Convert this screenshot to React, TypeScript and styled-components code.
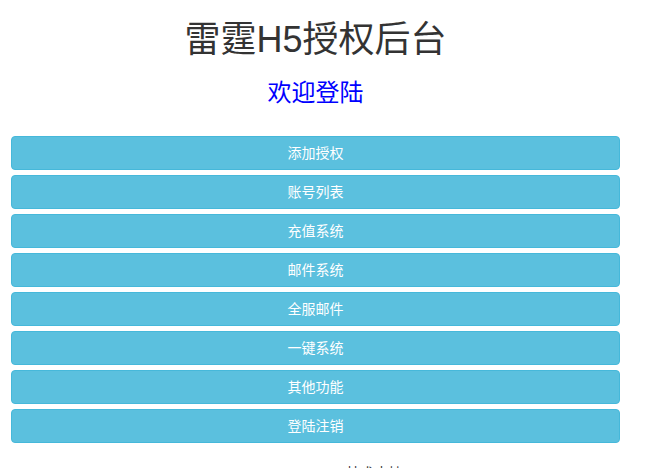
import styled, { createGlobalStyle } from 'styled-components';

const GlobalStyle = createGlobalStyle`
  html, body {
    margin: 0;
    padding: 0;
    background: #fff;
    font-family: "Liberation Sans", "Noto Sans CJK SC", sans-serif;
    font-size: 14px;
    line-height: 1.42857;
    color: #333;
  }
`;

const Page = styled.div`
  width: 609px;
  padding-left: 11px;
`;

const Title = styled.h1`
  margin: 20px 0 10px;
  font-size: 36px;
  font-weight: 400;
  line-height: 1.1;
  text-align: center;
  color: #333;
`;

const Welcome = styled.h3`
  margin: 20px 0 30px;
  font-size: 24px;
  font-weight: 400;
  line-height: 1.1;
  text-align: center;
  color: #0000ff;
`;

const Menu = styled.div`
  display: flex;
  flex-direction: column;
  gap: 5px;
`;

const MenuButton = styled.a`
  display: block;
  height: 34px;
  box-sizing: border-box;
  padding: 6px 12px;
  border: 1px solid #46b8da;
  border-radius: 4px;
  background: #5bc0de;
  color: #fff;
  font-size: 14px;
  line-height: 20px;
  text-align: center;
  text-decoration: none;
  cursor: pointer;
`;

const Footer = styled.p`
  margin: 20px 0 0;
  padding-left: 118px;
  text-align: center;
  font-size: 14px;
  line-height: 20px;
  color: #333;
`;

const items = [
  '添加授权',
  '账号列表',
  '充值系统',
  '邮件系统',
  '全服邮件',
  '一键系统',
  '其他功能',
  '登陆注销',
];

export default function App() {
  return (
    <>
      <GlobalStyle />
      <Page>
        <Title>雷霆H5授权后台</Title>
        <Welcome>欢迎登陆</Welcome>
        <Menu>
          {items.map((label) => (
            <MenuButton key={label}>{label}</MenuButton>
          ))}
        </Menu>
        <Footer>技术支持</Footer>
      </Page>
    </>
  );
}
